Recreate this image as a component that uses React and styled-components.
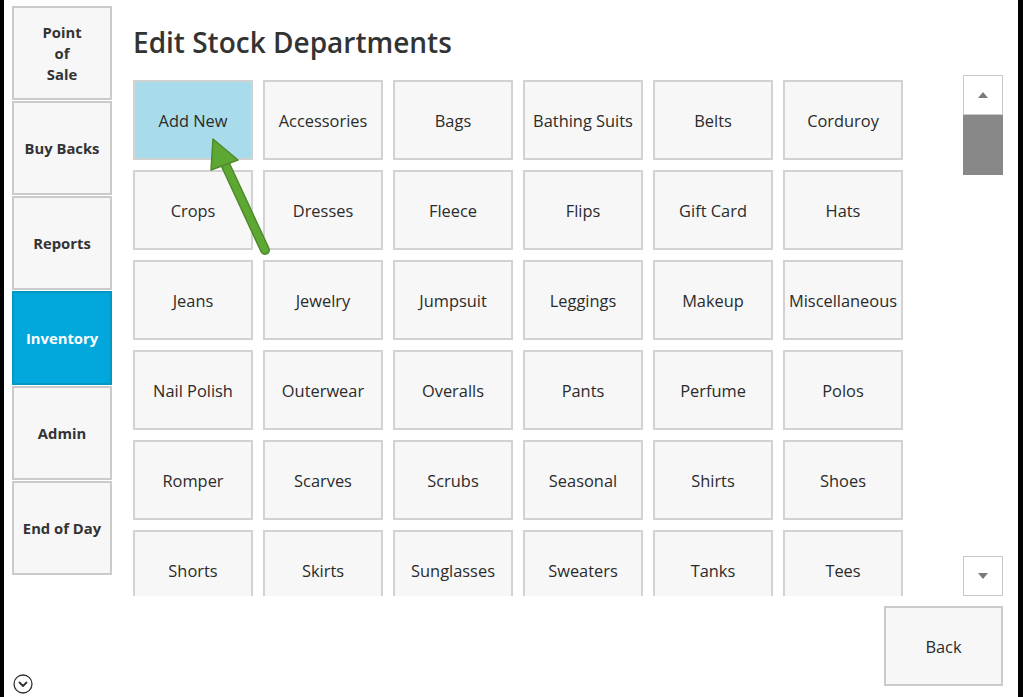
import styled, { createGlobalStyle } from "styled-components";

const GlobalStyle = createGlobalStyle`
  html, body {
    margin: 0;
    padding: 0;
    background: #fff;
  }
  body {
    font-family: "Open Sans", "Noto Sans", "Liberation Sans", sans-serif;
    color: #333;
  }
`;

const sideItems = [
  { label: ["Point", "of", "Sale"] },
  { label: ["Buy Backs"] },
  { label: ["Reports"] },
  { label: ["Inventory"], active: true },
  { label: ["Admin"] },
  { label: ["End of Day"] },
];

const departments = [
  "Add New", "Accessories", "Bags", "Bathing Suits", "Belts", "Corduroy",
  "Crops", "Dresses", "Fleece", "Flips", "Gift Card", "Hats",
  "Jeans", "Jewelry", "Jumpsuit", "Leggings", "Makeup", "Miscellaneous",
  "Nail Polish", "Outerwear", "Overalls", "Pants", "Perfume", "Polos",
  "Romper", "Scarves", "Scrubs", "Seasonal", "Shirts", "Shoes",
  "Shorts", "Skirts", "Sunglasses", "Sweaters", "Tanks", "Tees",
];

const Frame = styled.div`
  position: relative;
  display: flex;
  width: 1023px;
  height: 697px;
  box-sizing: border-box;
  border-left: 4px solid #000;
  border-right: 5px solid #000;
  background: #fff;
  overflow: hidden;
`;

const Sidebar = styled.nav`
  display: flex;
  flex-direction: column;
  gap: 1px;
  width: 100px;
  margin-left: 8px;
  padding-top: 6px;
`;

const SideButton = styled.div`
  height: 94px;
  box-sizing: border-box;
  border: 2px solid ${({ $active }) => ($active ? "#0597c4" : "#cbcbcb")};
  background: ${({ $active }) => ($active ? "#02a8dc" : "#f7f7f7")};
  color: ${({ $active }) => ($active ? "#fff" : "#333")};
  display: flex;
  flex-direction: column;
  align-items: center;
  justify-content: center;
  font-size: 14.8px;
  font-weight: 700;
  line-height: 21px;
  text-align: center;
  white-space: nowrap;
`;

const Content = styled.main`
  flex: 1;
  display: flex;
  flex-direction: column;
  padding: 0 15px 0 21px;
`;

const Title = styled.h1`
  margin: 0;
  height: 80px;
  box-sizing: border-box;
  padding-top: 22px;
  font-size: 28px;
  font-weight: 600;
  line-height: 40px;
  color: #333;
`;

const Body = styled.div`
  display: flex;
  justify-content: space-between;
  align-items: flex-start;
`;

const GridViewport = styled.div`
  position: relative;
  width: 770px;
  height: 516px;
  overflow: hidden;
`;

const Grid = styled.div`
  display: grid;
  grid-template-columns: repeat(6, 120px);
  grid-auto-rows: 80px;
  gap: 10px;
`;

const DeptButton = styled.div`
  box-sizing: border-box;
  border: 2px solid #d2d2d2;
  background: ${({ $highlight }) => ($highlight ? "#a9dcea" : "#f7f7f7")};
  display: flex;
  align-items: center;
  justify-content: center;
  padding-top: 1px;
  font-size: 16.4px;
  font-weight: 500;
  color: #2b2b2b;
  white-space: nowrap;
`;

const Scrollbar = styled.div`
  display: flex;
  flex-direction: column;
  width: 40px;
  height: 521px;
  margin-top: -5px;
`;

const ScrollArrow = styled.div`
  height: 40px;
  box-sizing: border-box;
  border: 1px solid #c8c8c8;
  background: #fff;
  display: flex;
  align-items: center;
  justify-content: center;
  margin-top: ${({ $down }) => ($down ? "auto" : "0")};
`;

const Thumb = styled.div`
  height: 60px;
  background: #888;
`;

const Footer = styled.div`
  display: flex;
  justify-content: flex-end;
  padding-top: 10px;
`;

const BackButton = styled.div`
  width: 119px;
  height: 80px;
  box-sizing: border-box;
  border: 2px solid #cbcbcb;
  background: #f7f7f7;
  display: flex;
  align-items: center;
  justify-content: center;
  padding-top: 1px;
  font-size: 16.4px;
  font-weight: 500;
  color: #2b2b2b;
`;

const ExpandIcon = styled.svg`
  position: absolute;
  left: 8px;
  bottom: 2px;
`;

const Pointer = styled.svg`
  position: absolute;
  left: 0;
  top: 0;
  pointer-events: none;
`;

const Caret = ({ down }) => (
  <svg width="10" height="6" viewBox="0 0 10 6">
    <polygon
      points={down ? "0,0 10,0 5,6" : "0,6 10,6 5,0"}
      fill="#7a7a7a"
    />
  </svg>
);

export default function App() {
  return (
    <>
      <GlobalStyle />
      <Frame>
        <Sidebar>
          {sideItems.map((item) => (
            <SideButton key={item.label.join(" ")} $active={item.active}>
              {item.label.map((line) => (
                <span key={line}>{line}</span>
              ))}
            </SideButton>
          ))}
        </Sidebar>

        <Content>
          <Title>Edit Stock Departments</Title>
          <Body>
            <GridViewport>
              <Grid>
                {departments.map((name, i) => (
                  <DeptButton key={name} $highlight={i === 0}>
                    {name}
                  </DeptButton>
                ))}
              </Grid>
            </GridViewport>
            <Scrollbar>
              <ScrollArrow>
                <Caret />
              </ScrollArrow>
              <Thumb />
              <ScrollArrow $down>
                <Caret down />
              </ScrollArrow>
            </Scrollbar>
          </Body>
          <Footer>
            <BackButton>Back</BackButton>
          </Footer>
        </Content>

        <ExpandIcon width="22" height="22" viewBox="0 0 22 22">
          <circle cx="11" cy="11" r="9" fill="none" stroke="#333" strokeWidth="1.3" />
          <polyline
            points="7.5,9.5 11,13 14.5,9.5"
            fill="none"
            stroke="#333"
            strokeWidth="1.8"
            strokeLinecap="round"
            strokeLinejoin="round"
          />
        </ExpandIcon>

        <Pointer width="1014" height="697" viewBox="4 0 1014 697">
          <line x1="265" y1="250" x2="226" y2="166" stroke="#4f8a2a" strokeWidth="10" strokeLinecap="round" />
          <line x1="265" y1="250" x2="226" y2="166" stroke="#5da832" strokeWidth="7" strokeLinecap="round" />
          <polygon points="213,139 238,160 211,170" fill="#5da832" stroke="#4f8a2a" strokeWidth="1.5" strokeLinejoin="round" />
        </Pointer>
      </Frame>
    </>
  );
}
